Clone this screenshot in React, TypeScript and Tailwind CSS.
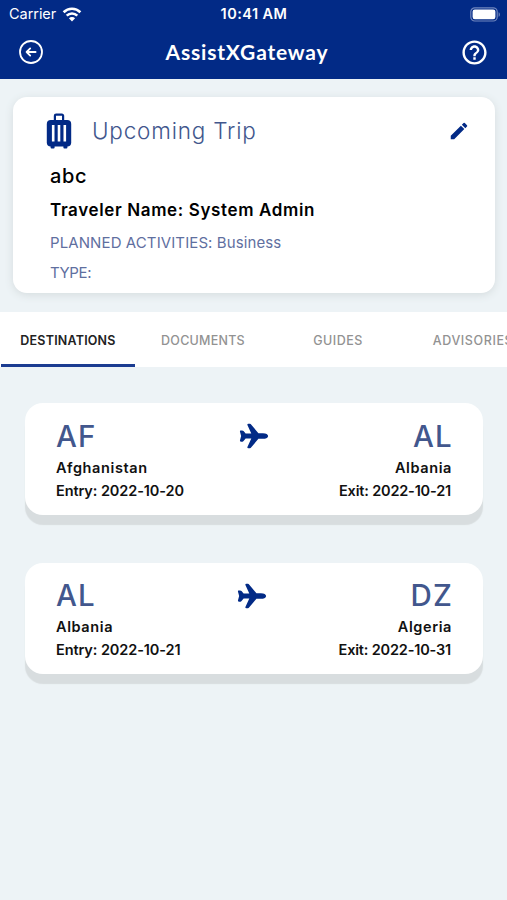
import { useState } from "react";
import { IoAirplane } from "react-icons/io5";
import { MdHelpOutline, MdModeEdit } from "react-icons/md";

type Stop = {
  code: string;
  country: string;
  date: string;
};

type Leg = {
  from: Stop;
  to: Stop;
};

const legs: Leg[] = [
  {
    from: { code: "AF", country: "Afghanistan", date: "2022-10-20" },
    to: { code: "AL", country: "Albania", date: "2022-10-21" },
  },
  {
    from: { code: "AL", country: "Albania", date: "2022-10-21" },
    to: { code: "DZ", country: "Algeria", date: "2022-10-31" },
  },
];

const tabs = [
  { label: "DESTINATIONS", tracking: "tracking-[0.2px]" },
  { label: "DOCUMENTS", tracking: "tracking-[0.25px]" },
  { label: "GUIDES", tracking: "tracking-[0.5px]" },
  { label: "ADVISORIES", tracking: "tracking-[0.6px]" },
];

function WifiIcon() {
  return (
    <svg width="20" height="15" viewBox="0 0 20 15" fill="none" stroke="white" strokeWidth="2.6">
      <path d="M1.6 5.2a12 12 0 0 1 16.8 0" />
      <path d="M4.7 8.6a7.6 7.6 0 0 1 10.6 0" />
      <path d="M10 14.4 6.9 11.3a4.4 4.4 0 0 1 6.2 0z" fill="white" stroke="none" />
    </svg>
  );
}

function BatteryIcon() {
  return (
    <svg width="31" height="15" viewBox="0 0 31 15">
      <rect x="0.8" y="0.8" width="26.4" height="13.2" rx="4" fill="none" stroke="#7086bd" strokeWidth="1.2" />
      <rect x="2.6" y="2.6" width="22.8" height="9.6" rx="2.2" fill="white" />
      <path d="M28.6 5.2c1.7.7 1.7 3.9 0 4.6z" fill="#7086bd" />
    </svg>
  );
}

function BackIcon() {
  return (
    <svg width="26" height="26" viewBox="0 0 26 26" fill="none" stroke="white" strokeWidth="1.8" strokeLinecap="round" strokeLinejoin="round">
      <circle cx="13" cy="13" r="11" />
      <path d="M17.6 13H8.6M12.2 9.4 8.6 13l3.6 3.6" />
    </svg>
  );
}

function SuitcaseIcon() {
  return (
    <svg width="26" height="36" viewBox="0 0 26 36" fill="#022a86">
      <path d="M8.9 8V2.8a1.2 1.2 0 0 1 1.2-1.2h5.8a1.2 1.2 0 0 1 1.2 1.2V8" fill="none" stroke="#022a86" strokeWidth="2.2" />
      <rect x="0.8" y="7" width="24.4" height="26.4" rx="4" />
      <rect x="4.6" y="32" width="4" height="3.4" rx="1" />
      <rect x="17.4" y="32" width="4" height="3.4" rx="1" />
      <path d="M7.2 12v16.4M13 12v16.4M18.8 12v16.4" stroke="white" strokeWidth="2.6" />
    </svg>
  );
}

function LegCard({ leg, index }: { leg: Leg; index: number }) {
  return (
    <div
      className={`flex justify-between rounded-[18px] bg-white pl-[31px] pr-8 shadow-[0_10px_1px_#d8dddf] ${
        index === 0 ? "h-[112px] pt-4" : "h-[111px] pt-[15px]"
      }`}
    >
      <div className="w-[160px] whitespace-nowrap">
        <p className="h-[37px] text-[29.5px] font-medium leading-[35px] tracking-[1.2px] text-[#42578d]">{leg.from.code}</p>
        <p className="h-[23px] text-[14.5px] font-semibold leading-[23px] tracking-[0.6px] text-[#111]">{leg.from.country}</p>
        <p className="text-[14.5px] font-semibold leading-[23px] tracking-[-0.1px] text-[#111]">Entry: {leg.from.date}</p>
      </div>
      <IoAirplane className={`h-[30px] w-[30px] text-[#022a86] ${index === 0 ? "mt-0.5" : "mr-1 mt-[3px]"}`} />
      <div className="w-[160px] whitespace-nowrap text-right">
        <p className="-mr-[2px] h-[37px] text-[29.5px] font-medium leading-[35px] tracking-[1.2px] text-[#42578d]">{leg.to.code}</p>
        <p className="-mr-px h-[23px] text-[14.5px] font-semibold leading-[23px] tracking-[0.6px] text-[#111]">{leg.to.country}</p>
        <p className="text-[14.5px] font-semibold leading-[23px] tracking-[-0.18px] text-[#111]">Exit: {leg.to.date}</p>
      </div>
    </div>
  );
}

export default function App() {
  const [activeTab, setActiveTab] = useState("DESTINATIONS");

  return (
    <div className="h-[900px] w-[507px] overflow-hidden bg-[#edf3f6] font-['Inter',sans-serif]">
      <header className="h-[79px] bg-[#022a86] text-white">
        <div className="grid h-[27px] grid-cols-3 items-center pl-[9px] pr-[6px] pt-px">
          <div className="flex items-center gap-1.5">
            <span className="text-[14.5px] tracking-[-0.05px]">Carrier</span>
            <WifiIcon />
          </div>
          <span className="-ml-[2px] text-center text-[14.5px] font-semibold tracking-[0.45px]">10:41 AM</span>
          <div className="flex justify-end">
            <BatteryIcon />
          </div>
        </div>
        <div className="flex h-[50px] items-center justify-between pl-[18px] pr-[18px]">
          <button type="button" aria-label="Back">
            <BackIcon />
          </button>
          <h1 className="mr-[10px] font-['Lato',sans-serif] text-[21px] font-bold tracking-[0.8px]">AssistXGateway</h1>
          <button type="button" aria-label="Help">
            <MdHelpOutline className="h-[29px] w-[29px]" />
          </button>
        </div>
      </header>

      <section className="ml-[13px] mr-3 mt-[18px] h-[196px] rounded-[14px] bg-white pl-[37px] pr-[25px] pt-4 shadow-[0_2px_8px_#d5dcde]">
        <div className="-ml-[4px] flex h-9 items-center">
          <SuitcaseIcon />
          <h2 className="ml-5 text-[22.5px] font-light tracking-[0.8px] text-[#42578d]">Upcoming Trip</h2>
          <button type="button" aria-label="Edit trip" className="ml-auto">
            <MdModeEdit className="h-[22px] w-[22px] text-[#022a86]" />
          </button>
        </div>
        <p className="mt-[13px] h-7 text-[20px] font-medium leading-7 tracking-[0.7px] text-black">abc</p>
        <p className="mt-2 h-6 text-[17px] font-semibold leading-6 tracking-[0.63px] text-black">Traveler Name: System Admin</p>
        <p className="mt-[9px] h-6 text-[15px] leading-6 tracking-[0.1px] text-[#5f6f9f]">PLANNED ACTIVITIES: Business</p>
        <p className="mt-1.5 h-6 text-[15px] leading-6 tracking-[-0.4px] text-[#5f6f9f]">TYPE:</p>
      </section>

      <nav className="mt-[19px] flex h-[55px] w-[540px] bg-white">
        {tabs.map((tab) => (
          <button
            key={tab.label}
            type="button"
            onClick={() => setActiveTab(tab.label)}
            className={`ml-px h-[55px] w-[134px] shrink-0 border-b-[3px] pt-[7px] text-[12.5px] ${tab.tracking} ${
              tab.label === activeTab
                ? "border-[#1b3c91] font-semibold text-[#222]"
                : "border-transparent font-medium text-[#929292]"
            }`}
          >
            {tab.label}
          </button>
        ))}
      </nav>

      <main className="flex flex-col gap-12 pl-[25px] pr-6 pt-9">
        {legs.map((leg, index) => (
          <LegCard key={leg.from.code} leg={leg} index={index} />
        ))}
      </main>
    </div>
  );
}
